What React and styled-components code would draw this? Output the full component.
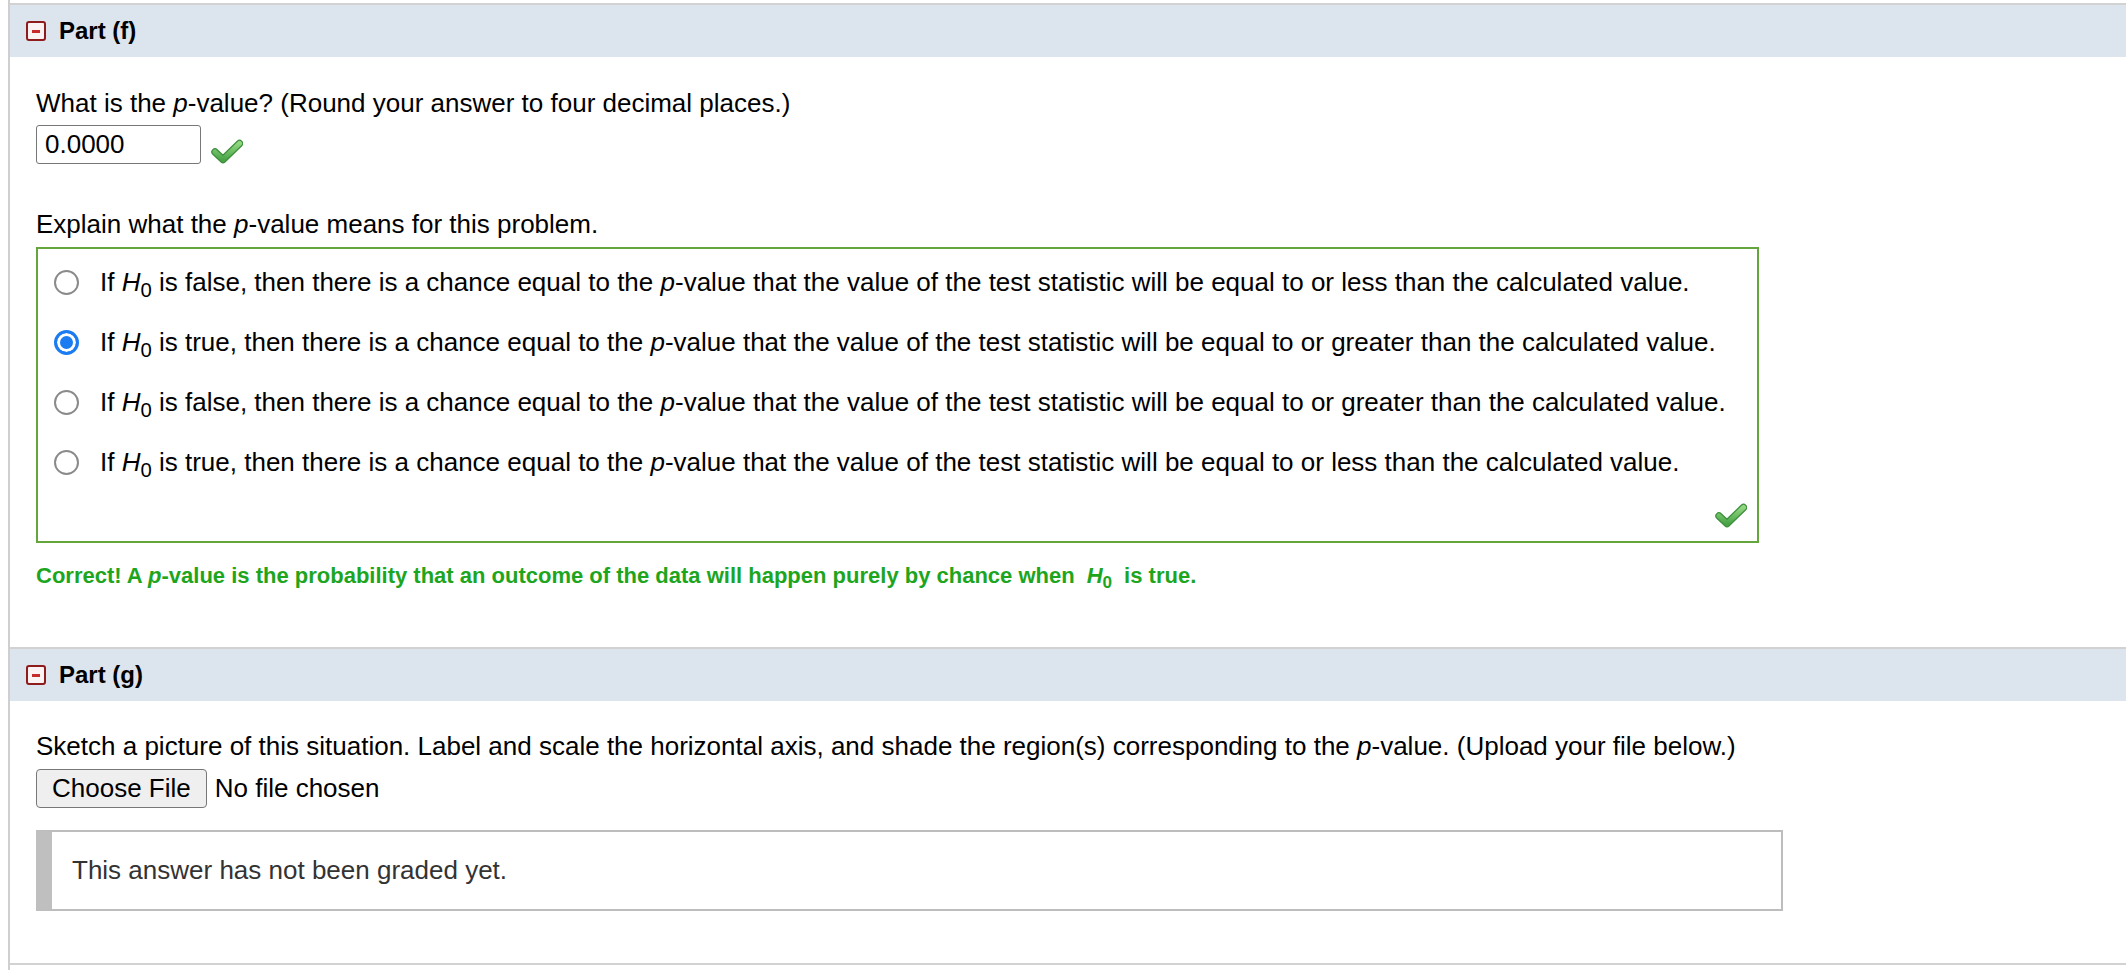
import React from "react";
import styled, { createGlobalStyle } from "styled-components";

const GlobalStyle = createGlobalStyle`
  html, body {
    margin: 0;
    padding: 0;
    background: #fff;
  }
  body {
    font-family: "Liberation Sans", Arial, sans-serif;
    color: #000;
  }
`;

const Page = styled.div`
  margin-left: 8px;
  border-left: 2px solid #cfcfcf;
  padding-top: 3px;
  min-height: 970px;
`;

const Section = styled.section`
  border-top: 2px solid #d2d2d2;
`;

const Header = styled.div`
  height: 52px;
  background: #dce5ee;
  display: flex;
  align-items: center;
  padding-left: 16px;
  gap: 13px;
`;

const Toggle = styled.span`
  box-sizing: border-box;
  width: 20px;
  height: 20px;
  border: 2px solid #8e1c1c;
  border-radius: 3px;
  background: #fbf3f3;
  display: flex;
  align-items: center;
  justify-content: center;
  &::after {
    content: "";
    width: 8px;
    height: 3px;
    background: #c72a2a;
  }
`;

const Title = styled.h3`
  margin: 0;
  font-size: 24px;
  font-weight: bold;
`;

const Body = styled.div`
  padding: ${(p) => p.$pad};
  padding-left: 26px;
`;

const Text = styled.p`
  margin: 0;
  font-size: 26px;
  line-height: 30px;
  color: ${(p) => p.$color || "#000"};
`;

const AnswerRow = styled.div`
  display: flex;
  align-items: flex-end;
  gap: 10px;
  margin: 7px 0 45px;
`;

const Input = styled.div`
  box-sizing: border-box;
  width: 165px;
  height: 39px;
  border: 1.5px solid #777;
  border-radius: 3px;
  padding-left: 8px;
  font-size: 26px;
  line-height: 36px;
`;

const ChoiceBox = styled.div`
  box-sizing: border-box;
  width: 1723px;
  margin-top: 8px;
  border: 2px solid #64a53c;
  padding: 3px 10px 13px 16px;
`;

const Choice = styled.label`
  height: 60px;
  display: flex;
  align-items: center;
  gap: 21px;
  font-size: 26px;
`;

const Radio = styled.span`
  box-sizing: border-box;
  width: 25px;
  height: 25px;
  border-radius: 50%;
  flex-shrink: 0;
  border: ${(p) => (p.$checked ? "3px solid #1a7cf0" : "2px solid #8a8a8a")};
  background: ${(p) => (p.$checked ? "#1a7cf0" : "#fff")};
  box-shadow: ${(p) => (p.$checked ? "inset 0 0 0 3px #fff" : "none")};
`;

const BoxFooter = styled.div`
  display: flex;
  justify-content: flex-end;
  margin-top: 11px;
`;

const Feedback = styled.p`
  margin: 20px 0 0;
  font-size: 22px;
  line-height: 26px;
  font-weight: bold;
  color: #1ea51e;
`;

const Spaced = styled.span`
  margin: 0 12px;
`;

const Sub = styled.sub`
  font-style: normal;
  font-size: 0.78em;
  vertical-align: -0.3em;
  line-height: 0;
`;

const UploadRow = styled.div`
  display: flex;
  align-items: center;
  gap: 8px;
  margin-top: 8px;
  font-size: 26px;
`;

const FileButton = styled.button`
  box-sizing: border-box;
  height: 39px;
  padding: 0 15px;
  font-family: "Liberation Sans", Arial, sans-serif;
  font-size: 26px;
  color: #000;
  background: #efefef;
  border: 1.5px solid #777;
  border-radius: 4px;
`;

const Graded = styled.div`
  box-sizing: border-box;
  width: 1747px;
  margin-top: 22px;
  border: 2px solid #bdbdbd;
  border-left: 16px solid #bfbfbf;
  padding: 23px 20px;
  font-size: 26px;
  line-height: 31px;
  color: #333;
`;

const CheckMark = () => (
  <svg width="32" height="25" viewBox="0 0 32 25">
    <defs>
      <linearGradient id="ck" x1="0" y1="0" x2="0" y2="1">
        <stop offset="0" stopColor="#8fd67f" />
        <stop offset="1" stopColor="#4aa447" />
      </linearGradient>
    </defs>
    <path d="M4 13 L12 20.5 L28.5 4.5" fill="none" stroke="#3d8f3b" strokeWidth="7.5" strokeLinecap="round" strokeLinejoin="round" />
    <path d="M4 13 L12 20.5 L28.5 4.5" fill="none" stroke="url(#ck)" strokeWidth="5" strokeLinecap="round" strokeLinejoin="round" />
  </svg>
);

const H0 = () => (
  <>
    <i>H</i>
    <Sub>0</Sub>
  </>
);

const choices = [
  { truth: "false", dir: "less", checked: false },
  { truth: "true", dir: "greater", checked: true },
  { truth: "false", dir: "greater", checked: false },
  { truth: "true", dir: "less", checked: false },
];

export default function App() {
  return (
    <>
      <GlobalStyle />
      <Page>
        <Section>
          <Header>
            <Toggle />
            <Title>Part (f)</Title>
          </Header>
          <Body $pad="31px 26px 58px">
            <Text>
              What is the <i>p</i>-value? (Round your answer to four decimal places.)
            </Text>
            <AnswerRow>
              <Input>0.0000</Input>
              <CheckMark />
            </AnswerRow>
            <Text>
              Explain what the <i>p</i>-value means for this problem.
            </Text>
            <ChoiceBox>
              {choices.map((c, i) => (
                <Choice key={i}>
                  <Radio $checked={c.checked} />
                  <span>
                    If <H0 /> is {c.truth}, then there is a chance equal to the <i>p</i>-value that the
                    value of the test statistic will be equal to or {c.dir} than the calculated value.
                  </span>
                </Choice>
              ))}
              <BoxFooter>
                <CheckMark />
              </BoxFooter>
            </ChoiceBox>
            <Feedback>
              Correct! A <i>p</i>-value is the probability that an outcome of the data will happen purely by
              chance when
              <Spaced>
                <H0 />
              </Spaced>
              is true.
            </Feedback>
          </Body>
        </Section>
        <Section>
          <Header>
            <Toggle />
            <Title>Part (g)</Title>
          </Header>
          <Body $pad="30px 26px 52px">
            <Text>
              Sketch a picture of this situation. Label and scale the horizontal axis, and shade the
              region(s) corresponding to the <i>p</i>-value. (Upload your file below.)
            </Text>
            <UploadRow>
              <FileButton>Choose File</FileButton>
              <span>No file chosen</span>
            </UploadRow>
            <Graded>This answer has not been graded yet.</Graded>
          </Body>
        </Section>
        <Section />
      </Page>
    </>
  );
}
